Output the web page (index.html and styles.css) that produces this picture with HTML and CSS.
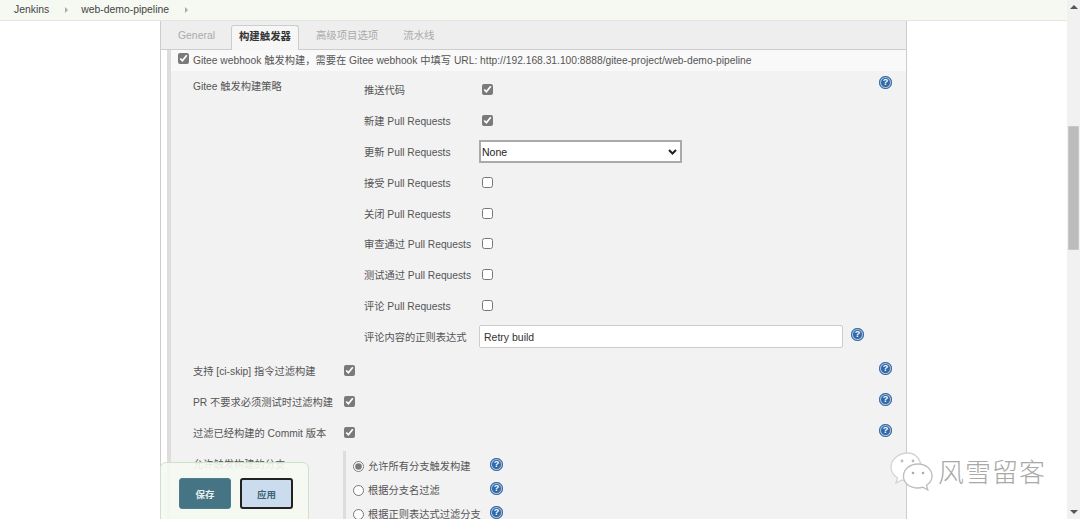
FILE: index.html
```html
<!DOCTYPE html>
<html lang="zh">
<head>
<meta charset="utf-8">
<title>web-demo-pipeline</title>
<link rel="stylesheet" href="styles.css">
</head>
<body>
<div class="app">
  <div class="main">
    <nav class="crumbs">
      <a>Jenkins</a><i class="tri"></i><a>web-demo-pipeline</a><i class="tri"></i>
    </nav>
    <div class="content">
      <div class="panel">
        <div class="tabs">
          <span class="tab">General</span>
          <span class="tab active">构建触发器</span>
          <span class="tab">高级项目选项</span>
          <span class="tab">流水线</span>
        </div>
        <div class="section">
          <label class="head-row"><input type="checkbox" checked>Gitee webhook 触发构建，需要在 Gitee webhook 中填写 URL: http://192.168.31.100:8888/gitee-project/web-demo-pipeline</label>
          <div class="body">
            <div class="strategy">
              <div class="strategy-label">Gitee 触发构建策略</div>
              <div class="options">
                <span>推送代码</span><input type="checkbox" checked>
                <span>新建 Pull Requests</span><input type="checkbox" checked>
                <span>更新 Pull Requests</span><select class="sel"><option>None</option></select>
                <span>接受 Pull Requests</span><input type="checkbox">
                <span>关闭 Pull Requests</span><input type="checkbox">
                <span>审查通过 Pull Requests</span><input type="checkbox">
                <span>测试通过 Pull Requests</span><input type="checkbox">
                <span>评论 Pull Requests</span><input type="checkbox">
                <span>评论内容的正则表达式</span><div class="regex"><input class="txt" type="text" value="Retry build"><span class="help">?</span></div>
              </div>
              <span class="help top">?</span>
            </div>
            <div class="filters">
              <span>支持 [ci-skip] 指令过滤构建</span><input type="checkbox" checked><span class="help">?</span>
              <span>PR 不要求必须测试时过滤构建</span><input type="checkbox" checked><span class="help">?</span>
              <span>过滤已经构建的 Commit 版本</span><input type="checkbox" checked><span class="help">?</span>
            </div>
            <div class="branches">
              <div class="branch-label">允许触发构建的分支</div>
              <div class="radios">
                <input type="radio" name="b" checked><span>允许所有分支触发构建</span><span class="help">?</span>
                <input type="radio" name="b"><span>根据分支名过滤</span><span class="help">?</span>
                <input type="radio" name="b"><span>根据正则表达式过滤分支</span><span class="help">?</span>
              </div>
            </div>
          </div>
        </div>
      </div>
    </div>
  </div>
  <div class="scrollbar">
    <i class="arrow up"></i>
    <div class="thumb"></div>
    <i class="arrow down"></i>
  </div>
</div>
<div class="savebar">
  <button class="btn save">保存</button>
  <button class="btn apply">应用</button>
</div>
<div class="watermark">
  <svg class="wechat" width="46" height="42" viewBox="0 0 46 42">
    <path d="M20 3C10.500 3 3 9.500 3 17c0 4.500 2.500 8.300 6.500 11l-1.500 5 6-3c2 .6 4 .9 6 .9 1 0 2-.1 3-.2C38 30 36 3 20 3z" fill="#fff" stroke="#d4d4d4" stroke-width="1.300"/>
    <path d="M30 14c-8.300 0-14.500 5.500-14.500 12.300S21.700 38 30 38c1.700 0 3.300-.2 4.800-.8l5 2.800-1.300-4.800c3.500-2.300 5.500-5.800 5.500-9C44 19.500 38 14 30 14z" fill="#fff" stroke="#bdbdbd" stroke-width="1.300"/>
    <circle cx="14" cy="11" r="1.400" fill="#bbb"/><circle cx="25" cy="11" r="1.400" fill="#bbb"/>
    <circle cx="25" cy="23" r="1.300" fill="#aaa"/><circle cx="35" cy="23" r="1.300" fill="#aaa"/>
  </svg>
  <span class="brand">风雪留客</span>
</div>
</body>
</html>
```
FILE: styles.css
```css
* { box-sizing: border-box; }
html, body { margin: 0; height: 100%; overflow: hidden; background: #fff; }
body {
  font-family: "Liberation Sans", "Noto Sans CJK SC", sans-serif;
  font-size: 10.25px;
  color: #555;
}
input[type="checkbox"], input[type="radio"] { margin: 0; width: 11px; height: 11px; accent-color: #7a7a7a; }

.app { display: flex; height: 519px; }
.main { flex: 1; display: flex; flex-direction: column; min-width: 0; }

.crumbs {
  height: 21px; flex: none; display: flex; align-items: center;
  padding: 0 0 1px 14px; font-size: 10.4px; background: #f6f9f2; border-bottom: 1px solid #e4e6e2; color: #444;
}
.tri { width: 0; height: 0; margin: 0 13px 0 16px; border-left: 3px solid #aaa; border-top: 3px solid transparent; border-bottom: 3px solid transparent; }

.content { flex: 1; min-height: 0; padding-left: 160px; padding-right: 160px; overflow: hidden; }
.panel { width: 747px; height: 100%; border-left: 1px solid #ccc; border-right: 1px solid #ccc; }

.tabs { height: 29px; display: flex; align-items: flex-end; background: #eee; border-bottom: 1px solid #ccc; padding-left: 9px; font-size: 10.4px; }
.tab { height: 25px; line-height: 24px; padding: 0 8px; margin-right: 1px; color: #aaa; }
.tab:nth-child(3) { margin-left: 8px; }
.tab:nth-child(4) { margin-left: 8px; }
.tab.active { height: 25px; margin-bottom: -1px; margin-left: 7px; padding: 1px 7px 0; line-height: 20px; color: #333; font-weight: bold; background: #f6f6f6; border: 1px solid #ccc; border-bottom: 0; border-radius: 3px 3px 0 0; }

.section { margin-left: 6px; border-left: 4px solid #ddd; height: 100%; }
.head-row { display: flex; align-items: center; height: 21px; padding: 0 0 3px 7px; gap: 4px; background: #f9f9f9; }
.head-row input { position: relative; top: -1px; }

.body { background: #f2f2f2; height: 100%; padding-left: 22px; }

.strategy { display: grid; grid-template-columns: 171px 1fr 21px; }
.strategy-label { padding-top: 7px; }
.help {
  display: inline-block; width: 13px; height: 13px; border-radius: 50%;
  background: #3268a5; box-shadow: inset 0 0 0 1px #3268a5, inset 0 0 0 2px #a9c3de;
  color: #fff; font: bold 9px/13px "Liberation Sans", sans-serif; text-align: center;
}
.help.top { margin: 5px 0 0 -6px; }

.options { display: grid; grid-template-columns: 118px 1fr; grid-auto-rows: 30.9px; align-items: center; padding-top: 3px; }
.sel {
  appearance: none; width: 203px; height: 23px; margin: 1px 0 0 -3px; padding: 0 0 0 1px;
  font: 10.5px "Liberation Sans", sans-serif; color: #222; border: 2px solid #aaa; outline: 0;
  background: #fff url("data:image/svg+xml,%3Csvg xmlns='http://www.w3.org/2000/svg' width='9' height='6'%3E%3Cpath d='M1 1l3.500 3.500L8 1' fill='none' stroke='%23222' stroke-width='2'/%3E%3C/svg%3E") no-repeat right 3px center;
}
.regex { display: flex; align-items: center; margin-left: -3px; gap: 8px; }
.regex .help { margin-top: -5px; }
.txt { width: 364px; height: 23px; padding: 0 4px; font: 10.5px "Liberation Sans", sans-serif; color: #333; background: #fff; border: 1px solid #ccc; border-radius: 2px; outline: 0; }

.filters { display: grid; grid-template-columns: 151px 535px 13px; grid-auto-rows: 31px; align-items: center; margin-top: 3px; }
.filters .help { margin-top: -4px; }

.branches { display: grid; grid-template-columns: 150px 1fr; margin-top: 3px; }
.branch-label { padding-top: 5px; }
.radios { display: grid; grid-template-columns: 15px 122px 13px; grid-auto-rows: 24px; align-items: center; border-left: 3px solid #ddd; padding: 2px 0 0 7px; justify-content: start; height: 100px; }
.radios .help { margin-top: -2px; }
.radios input { margin: 3px 0 0 0; }

.scrollbar { width: 13px; flex: none; display: flex; flex-direction: column; align-items: center; background: #f1f1f1; position: relative; padding-top: 126px; }
.thumb { width: 11px; height: 124px; background: #bcbcbc; border: 1px solid #c9c9c9; }
.arrow { position: absolute; left: 3px; width: 0; height: 0; border-left: 4px solid transparent; border-right: 4px solid transparent; }
.arrow.up { top: 5px; border-bottom: 4px solid #555; }
.arrow.down { bottom: 5px; border-top: 4px solid #555; }

.savebar {
  position: absolute; left: 160px; top: 462px; width: 149px; height: 60px;
  display: flex; gap: 9px; padding: 15px 0 0 18px;
  background: rgba(245, 250, 242, .9); border: 1px solid #cfe0cf; border-radius: 6px 6px 0 0;
}
.btn { width: 52px; height: 31px; padding: 0; font: bold 9.5px "Liberation Sans", "Noto Sans CJK SC", sans-serif; border-radius: 3px; }
.btn.save { color: #e9eef0; background: #457585; border: 1px solid #4d7c8b; }
.btn.apply { width: 53px; color: #3c6478; background: #cbdcee; border: 2px solid #222; }

.watermark { position: absolute; left: 888px; top: 450px; display: flex; align-items: center; gap: 4px; }
.wechat { display: block; }
.brand { font: 300 26px/1 "Noto Sans CJK SC", sans-serif; color: #a8a8a8; letter-spacing: 1px; }
```
